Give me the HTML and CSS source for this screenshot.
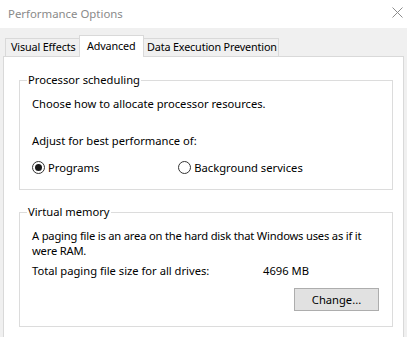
FILE: index.html
```html
<!DOCTYPE html>
<html>
<head>
<meta charset="utf-8">
<link rel="stylesheet" href="styles.css">
</head>
<body>
<div class="window">
  <div class="titlebar">
    <span class="title">Performance Options</span>
    <svg class="close" width="11" height="11" viewBox="0 0 11 11"><path d="M0.5 0.5 L10.5 10.5 M10.5 0.5 L0.5 10.5" stroke="#8c8c8c" stroke-width="1" fill="none"/></svg>
  </div>
  <div class="client">
    <div class="tabs">
      <div class="tab t1">Visual Effects</div>
      <div class="tab active">Advanced</div>
      <div class="tab t3">Data Execution Prevention</div>
    </div>
    <div class="panel">
      <fieldset class="group g1">
        <legend>Processor scheduling</legend>
        <p class="line l-choose">Choose how to allocate processor resources.</p>
        <p class="line l-adjust">Adjust for best performance of:</p>
        <div class="radios">
          <label class="radio"><span class="dot checked"></span>Programs</label>
          <label class="radio r2"><span class="dot"></span>Background services</label>
        </div>
      </fieldset>
      <fieldset class="group g2">
        <legend>Virtual memory</legend>
        <p class="line l-para">A paging file is an area on the hard disk that Windows uses as if it were RAM.</p>
        <div class="total"><span class="total-label">Total paging file size for all drives:</span><span class="total-val">4696 MB</span></div>
        <div class="btnrow"><button class="btn">Change...</button></div>
      </fieldset>
    </div>
  </div>
</div>
</body>
</html>
```
FILE: styles.css
```css
* { box-sizing: border-box; }
html, body { margin: 0; padding: 0; }
body {
  width: 407px;
  height: 337px;
  overflow: hidden;
  background: #f0f0f0;
  font-family: "Noto Sans", "Open Sans", sans-serif;
  font-size: 11.2px;
  color: #000;
}
.titlebar {
  height: 28px;
  background: #fff;
  display: flex;
  align-items: center;
  justify-content: space-between;
  padding: 0 4px 2px 8px;
}
.title { color: #8a8a8a; font-size: 11.4px; }
.close { margin-top: -2px; }
.client { padding: 7px 3px 0 3px; }
.tabs {
  display: flex;
  align-items: flex-end;
  padding-left: 2px;
  height: 21px;
  position: relative;
  z-index: 1;
}
.tab {
  height: 18px;
  border: 1px solid #d9d9d9;
  border-bottom: none;
  background: #f0f0f0;
  line-height: 16px;
  white-space: nowrap;
  flex: none;
  font-size: 10.8px;
  letter-spacing: -0.15px;
}
.t1 { width: 75px; padding-left: 5px; }
.tab.active {
  background: #fff;
  width: 65px;
  padding-left: 7px;
  line-height: 19px;
  margin-left: -1px;
  position: relative;
  z-index: 2;
  height: 22px;
  margin-bottom: -1px;
}
.t3 { width: 136px; padding-left: 3px; margin-left: -1px; }
.panel {
  background: #fff;
  border: 1px solid #d9d9d9;
  height: 290px;
  padding: 16px 10px 0 15px;
}
.group {
  margin: 0;
  border: 1px solid #dcdcdc;
  padding: 0 12px;
  min-width: 0;
}
.group legend {
  padding: 0 1px;
  margin-left: -5px;
  line-height: 14px;
}
.g1 { height: 117px; }
.g2 { height: 122px; margin-top: 15px; }
.line { margin: 0; line-height: 15px; }
.l-choose { margin-top: 9px; }
.l-adjust { margin-top: 22px; }
.radios { display: flex; margin-top: 12px; align-items: center; }
.radio { display: flex; align-items: center; height: 15px; }
.r2 { margin-left: 79px; }
.dot {
  width: 13px; height: 13px;
  border: 1px solid #333;
  border-radius: 50%;
  margin-right: 3px;
  display: inline-flex;
  align-items: center;
  justify-content: center;
}
.dot.checked::after {
  content: "";
  width: 7px; height: 7px;
  border-radius: 50%;
  background: #1a1a1a;
}
.l-para { margin-top: 9px; margin-right: -4px; letter-spacing: -0.2px; }
.total { display: flex; margin-top: 5px; line-height: 15px; }
.total-label { width: 231px; }
.btnrow { display: flex; justify-content: flex-end; margin-top: 10px; padding-right: 1px; }
.btn {
  width: 85px; height: 23px;
  background: #e1e1e1;
  border: 1px solid #adadad;
  font-family: inherit;
  font-size: 11.2px;
  color: #000;
  padding: 0;
}
```
